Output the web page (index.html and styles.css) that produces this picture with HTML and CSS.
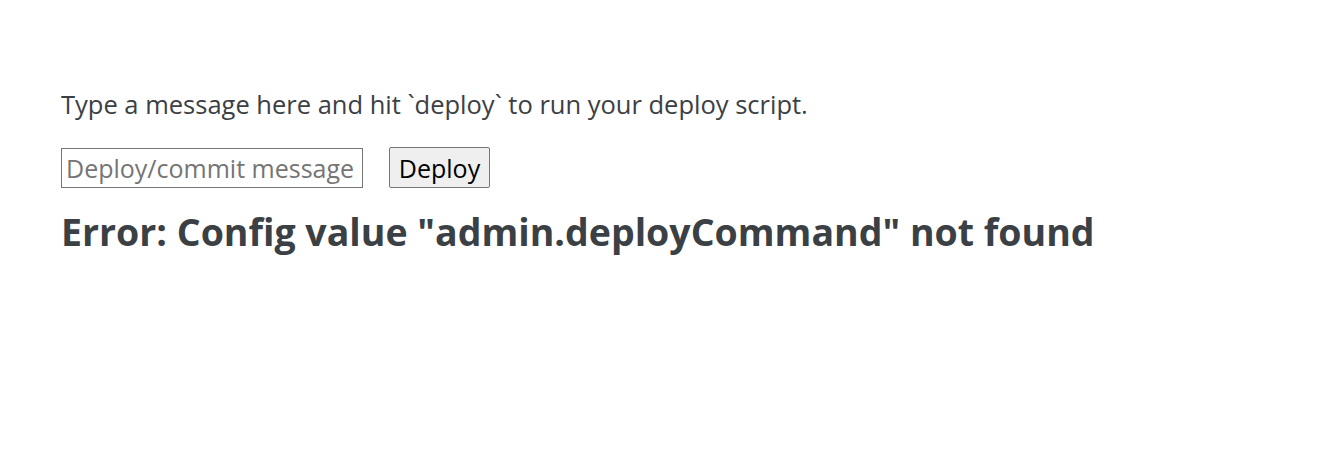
FILE: index.html
```html
<!DOCTYPE html>
<html>
<head>
<meta charset="utf-8">
<link rel="stylesheet" href="styles.css">
</head>
<body>
<main class="page">
  <p class="intro">Type a message here and hit `deploy` to run your deploy script.</p>
  <form class="deploy-form">
    <input class="msg-input" type="text" placeholder="Deploy/commit message">
    <button class="deploy-btn" type="button">Deploy</button>
  </form>
  <h2 class="error">Error: Config value "admin.deployCommand" not found</h2>
</main>
</body>
</html>
```
FILE: styles.css
```css
html, body {
  margin: 0;
  padding: 0;
  background: #ffffff;
}
body {
  font-family: "Open Sans", "Noto Sans", sans-serif;
  color: #3b4045;
}
.page {
  padding: 82px 61px;
}
.intro {
  margin: 0 0 21px 0;
  font-size: 25.5px;
  line-height: 44px;
}
.deploy-form {
  display: flex;
  align-items: center;
  gap: 26px;
  margin: 0;
}
.msg-input {
  font-family: "Open Sans", "Noto Sans", sans-serif;
  font-size: 25px;
  width: 302px;
  height: 40px;
  box-sizing: border-box;
  padding: 0 4px;
  border: 1px solid #767676;
  border-radius: 0;
  color: #000;
}
.msg-input::placeholder {
  color: #757575;
}
.deploy-btn {
  font-family: "Open Sans", "Noto Sans", sans-serif;
  font-size: 25px;
  height: 41px;
  width: 101px;
  padding: 0 8px;
  background: #efefef;
  border: 1px solid #767676;
  border-radius: 2px;
  color: #000;
}
.error {
  margin: 14px 0 0 0;
  font-size: 37.5px;
  font-weight: 700;
  line-height: 60px;
}
```
